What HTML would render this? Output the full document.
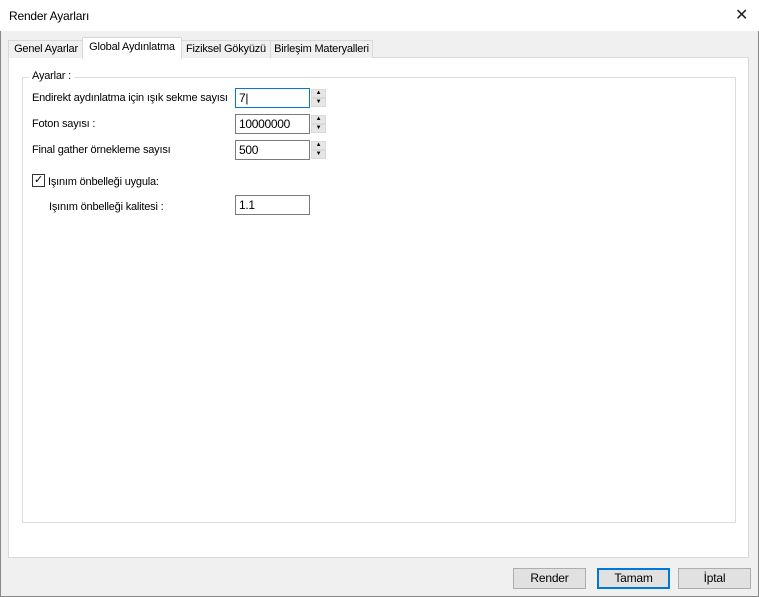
<!DOCTYPE html><html><head><style>
body{margin:0;width:759px;height:597px;background:#f0f0f0;font-family:"Liberation Sans",sans-serif;font-size:11px;letter-spacing:-0.2px;color:#000;position:relative;overflow:hidden}
.a{position:absolute;white-space:nowrap}
.win{position:absolute;left:0;top:0;width:757px;height:595px;border:1px solid #888;background:#f0f0f0}
.title{position:absolute;left:0;top:0;width:759px;height:31px;background:#fff}
.tab{position:absolute;top:40px;height:17px;border:1px solid #d9d9d9;border-bottom:none;background:#f0f0f0;line-height:17px;text-align:center;white-space:nowrap}
.inp{position:absolute;height:20px;border:1px solid #7a7a7a;background:#fff;line-height:18px;padding-left:3px;box-sizing:border-box;font-size:12px;letter-spacing:-0.3px}
.sp{position:absolute;width:15px;height:9px;background:#e6e6e6;border:1px solid #dadada;box-sizing:border-box;font-size:6px;line-height:7px;text-align:center}
.btn{position:absolute;top:568px;height:21px;border:1px solid #adadad;background:#e1e1e1;box-sizing:border-box;text-align:center;line-height:19px;font-size:12px}
</style></head><body>
<div class="win"></div>
<div class="title"></div>
<div class="a" style="left:9px;top:9px;font-size:12px">Render Ayarları</div>
<div class="a" style="left:735px;top:5px;font-size:16px;font-weight:100;color:#222">✕</div>
<div class="a" style="left:8px;top:57px;width:741px;height:501px;background:#fff;border:1px solid #d9d9d9;box-sizing:border-box"></div>
<div class="tab" style="left:8px;width:74px">Genel Ayarlar</div>
<div class="tab" style="left:82px;top:37px;height:21px;width:98px;background:#fff;border-color:#d9d9d9;line-height:19px;z-index:2">Global Aydınlatma</div>
<div class="tab" style="left:181px;width:88px">Fiziksel Gökyüzü</div>
<div class="tab" style="left:270px;width:101px">Birleşim Materyalleri</div>
<div class="a" style="left:22px;top:77px;width:714px;height:446px;border:1px solid #dcdcdc;box-sizing:border-box"></div>
<div class="a" style="left:29px;top:70px;background:#fff;padding:0 3px">Ayarlar :</div>
<div class="a" style="left:32px;top:92px">Endirekt aydınlatma için ışık sekme sayısı</div>
<div class="a" style="left:32px;top:118px">Foton sayısı :</div>
<div class="a" style="left:32px;top:144px">Final gather örnekleme sayısı</div>
<div class="inp" style="left:235px;top:88px;width:75px;border-color:#0078d7">7|</div>
<div class="inp" style="left:235px;top:114px;width:75px">10000000</div>
<div class="inp" style="left:235px;top:140px;width:75px">500</div>
<div class="sp" style="left:311px;top:89px">▲</div><div class="sp" style="left:311px;top:98px">▼</div>
<div class="sp" style="left:311px;top:115px">▲</div><div class="sp" style="left:311px;top:124px">▼</div>
<div class="sp" style="left:311px;top:141px">▲</div><div class="sp" style="left:311px;top:150px">▼</div>
<div class="a" style="left:32px;top:174px;width:13px;height:13px;border:1px solid #333;box-sizing:border-box;font-size:11px;line-height:11px;text-align:center">✓</div>
<div class="a" style="left:48px;top:176px">Işınım önbelleği uygula:</div>
<div class="a" style="left:49px;top:201px">Işınım önbelleği kalitesi :</div>
<div class="inp" style="left:235px;top:195px;width:75px">1.1</div>
<div class="btn" style="left:513px;width:73px">Render</div>
<div class="btn" style="left:597px;width:73px;border:2px solid #0078d7;line-height:17px">Tamam</div>
<div class="btn" style="left:678px;width:73px">İptal</div>
</body></html>
